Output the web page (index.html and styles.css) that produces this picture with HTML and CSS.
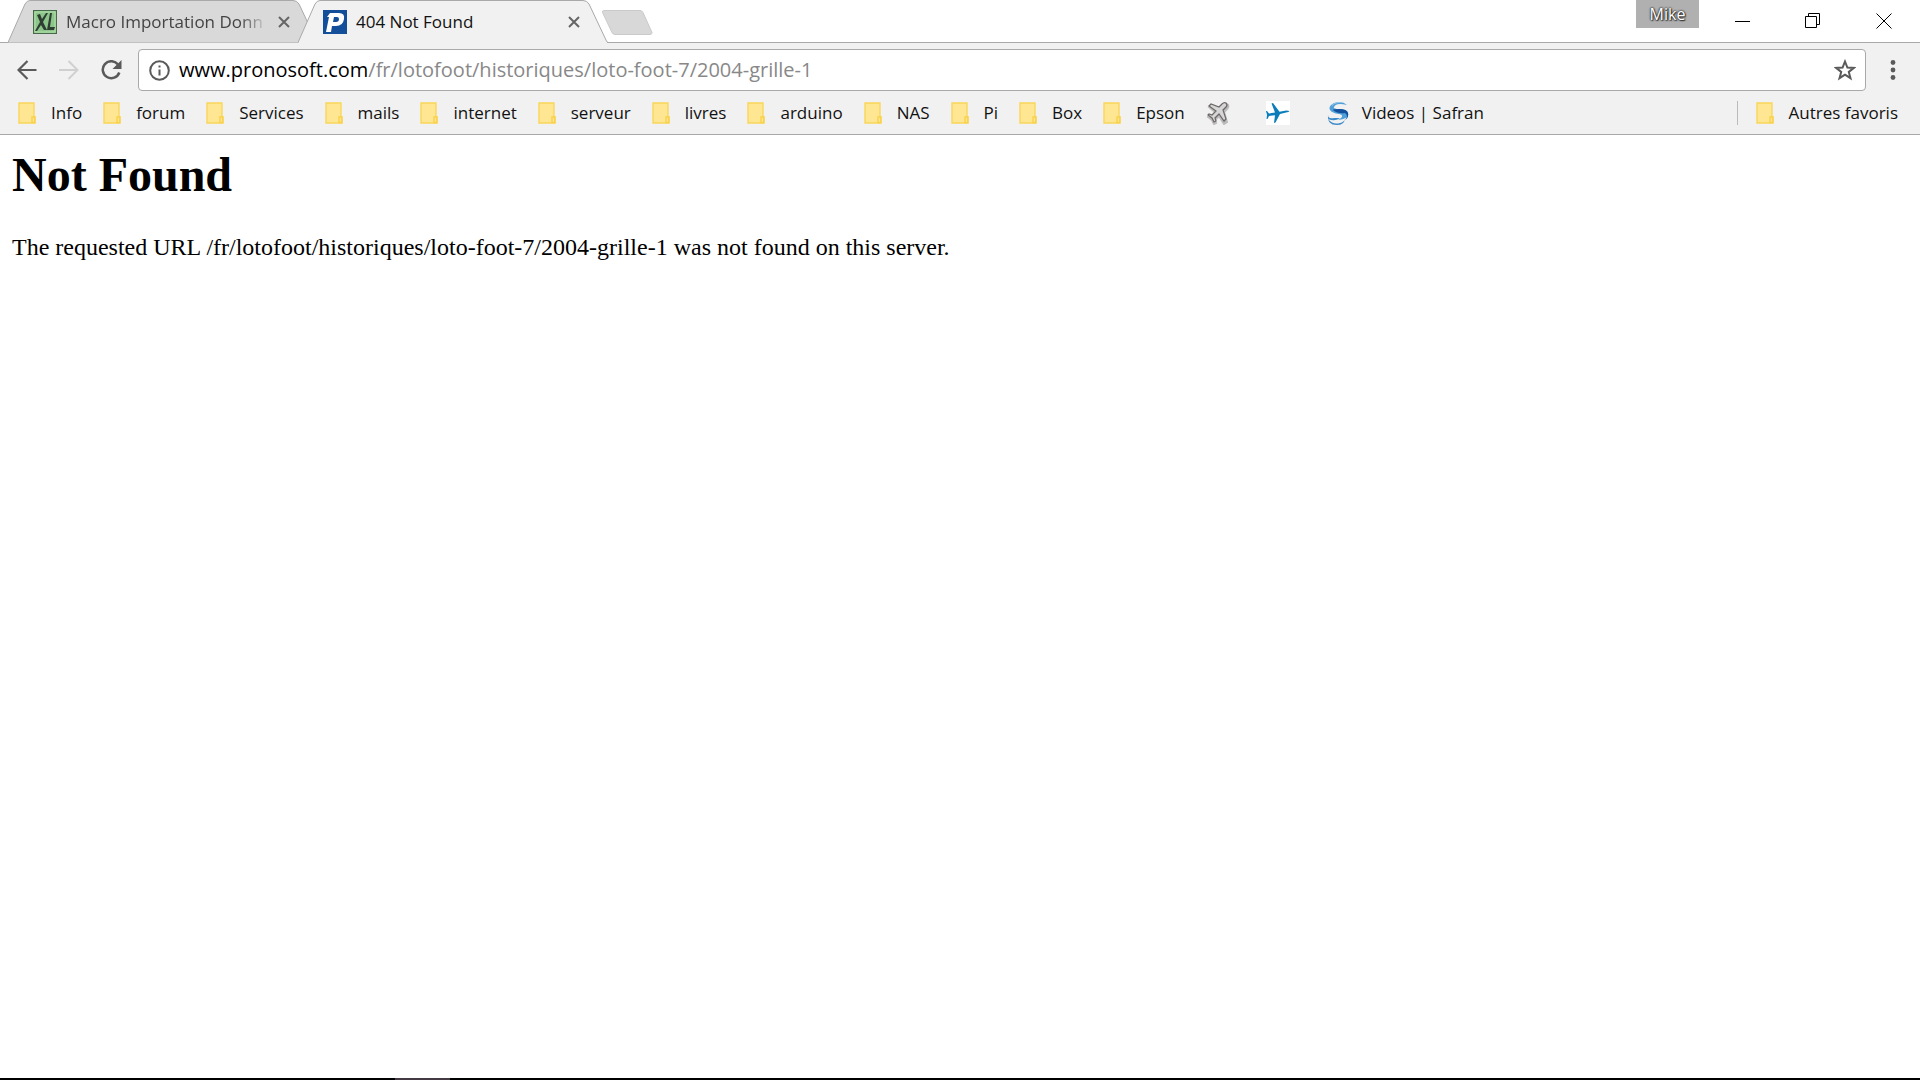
FILE: index.html
```html
<!DOCTYPE html>
<html lang="fr">
<head>
<meta charset="utf-8">
<title>404 Not Found</title>
<link rel="stylesheet" href="styles.css">
</head>
<body>
<svg class="defs" width="0" height="0" aria-hidden="true">
  <symbol id="folder" viewBox="0 0 18 22"><path d="M1 1h15v14h1v6H1z" fill="#ffe693" stroke="#f9d65a" stroke-width="1.4"/><path d="M14 20.500v-5.500h2.800v5.500z" fill="#ffe693" stroke="#f9d14a" stroke-width="1.400"/></symbol>
  <symbol id="cross" viewBox="0 0 12 12"><path d="M1 1l10 10M11 1L1 11" stroke="currentColor" stroke-width="2" fill="none"/></symbol>
  <symbol id="tabshape" viewBox="0 0 310 43"><path d="M0 42.500L17 4Q19 .5 22 .5H285Q289 .5 291 4L308 40Q309 42.500 310 42.500" stroke="#a9a9a9" stroke-width="1"/></symbol>
</svg>

<header class="chrome">
  <div class="strip">
    <div class="tabs">
      <div class="tab">
        <svg class="tab-shape" aria-hidden="true"><use href="#tabshape"/></svg>
        <svg class="favicon" viewBox="0 0 24 24" aria-hidden="true"><rect x=".5" y=".5" width="23" height="23" fill="#8cc68a" stroke="#47684a"/><path d="M2 2h20v20H2z" fill="none" stroke="#b4dfae"/><path d="M4 5l3-1 2 5 4-6h2l-5 9 4 8h-3l-3-5-4 6H2l5-9zM17 3h2l-2 14h5l-1 3h-7z" fill="#2f3e33"/></svg>
        <span class="tab-title fade">Macro Importation Donn</span>
        <button class="tab-close" aria-label="Fermer"><svg width="12" height="12"><use href="#cross"/></svg></button>
      </div>
      <div class="tab active">
        <svg class="tab-shape" aria-hidden="true"><use href="#tabshape"/></svg>
        <svg class="favicon" viewBox="0 0 24 24" aria-hidden="true"><rect width="24" height="24" fill="#124e9a"/><path fill-rule="evenodd" d="M7 3h9q6 0 5 6-1 7-8 7H9l-1 6H3L6 7H4zM11 7l-1 5h3q3 0 3-3 0-2-2-2z" fill="#fff"/></svg>
        <span class="tab-title">404 Not Found</span>
        <button class="tab-close" aria-label="Fermer"><svg width="12" height="12"><use href="#cross"/></svg></button>
      </div>
      <button class="new-tab" aria-label="Nouvel onglet"><svg width="51" height="25" viewBox="0 0 51 25"><path d="M2 .5h36q2 0 3 2l9 20q0 2-2 2H13q-2 0-3-2L.5 2.500Q0 .5 2 .5z" fill="#d8d8d8" stroke="#cacaca"/></svg></button>
    </div>
    <div class="window-controls">
      <button class="profile">Mike</button>
      <button class="win" aria-label="Réduire"><svg width="16" height="16"><path d="M0 8.500h15" stroke="#000"/></svg></button>
      <button class="win" aria-label="Restaurer"><svg width="16" height="16"><path d="M.5 3.500h11v11H.5zM3.500 3.500v-3h11v11h-3" fill="none" stroke="#000"/></svg></button>
      <button class="win" aria-label="Fermer la fenêtre"><svg width="16" height="16"><path d="M.5 .5l15 15M15.500 .5l-15 15" stroke="#000"/></svg></button>
    </div>
  </div>

  <div class="toolbar">
    <button class="nav" aria-label="Précédent"><svg width="20" height="20"><path d="M19.500 10H2M10.500 1L1.500 10l9 9" fill="none" stroke="#5a5a5a" stroke-width="2.200"/></svg></button>
    <button class="nav" aria-label="Suivant"><svg width="20" height="20"><path d="M0 10h18M9.500 1l9 9-9 9" fill="none" stroke="#d0d0d0" stroke-width="2"/></svg></button>
    <button class="nav" aria-label="Actualiser"><svg width="21" height="20"><path d="M17 4.500A8.500 8.500 0 1 0 18.300 12.500" fill="none" stroke="#5a5a5a" stroke-width="2.500"/><path d="M20.500 0v9h-9z" fill="#5a5a5a"/></svg></button>
    <div class="omnibox" role="group" aria-label="Adresse">
      <svg class="info" width="21" height="21" aria-hidden="true"><circle cx="10.500" cy="10.500" r="9.300" fill="none" stroke="#5a5a5a" stroke-width="2"/><path d="M9.500 9.500h2v6h-2zM9.500 5.500h2v2h-2z" fill="#5a5a5a"/></svg>
      <div class="url" role="textbox" aria-label="URL" contenteditable="true" spellcheck="false">www.pronosoft.com<span class="path">/fr/lotofoot/historiques/loto-foot-7/2004-grille-1</span></div>
      <button class="star" aria-label="Ajouter aux favoris"><svg width="22" height="22"><path d="M11 2.500l2.400 6 6.400.4-5 4 1.700 6.300-5.500-3.500-5.500 3.500 1.700-6.300-5-4 6.400-.4z" fill="none" stroke="#5a5a5a" stroke-width="2"/></svg></button>
    </div>
    <button class="menu" aria-label="Menu"><svg width="6" height="20"><g fill="#5a5a5a"><circle cx="3" cy="2.500" r="2.400"/><circle cx="3" cy="10" r="2.400"/><circle cx="3" cy="17.500" r="2.400"/></g></svg></button>
  </div>

  <nav class="bookmarks" aria-label="Favoris">
    <a href="#"><svg class="mark"><use href="#folder"/></svg>Info</a>
    <a href="#"><svg class="mark"><use href="#folder"/></svg>forum</a>
    <a href="#"><svg class="mark"><use href="#folder"/></svg>Services</a>
    <a href="#"><svg class="mark"><use href="#folder"/></svg>mails</a>
    <a href="#"><svg class="mark"><use href="#folder"/></svg>internet</a>
    <a href="#"><svg class="mark"><use href="#folder"/></svg>serveur</a>
    <a href="#"><svg class="mark"><use href="#folder"/></svg>livres</a>
    <a href="#"><svg class="mark"><use href="#folder"/></svg>arduino</a>
    <a href="#"><svg class="mark"><use href="#folder"/></svg>NAS</a>
    <a href="#"><svg class="mark"><use href="#folder"/></svg>Pi</a>
    <a href="#"><svg class="mark"><use href="#folder"/></svg>Box</a>
    <a href="#"><svg class="mark"><use href="#folder"/></svg>Epson</a>
    <a class="icon-only" href="#" aria-label="Avion gris"><svg width="24" height="24"><path d="M21 3q-2-2-5 1l-3 3-9-4-2 2 7 6-4 4-3-1-1 1 4 3 2 4 2-1-1-3 4-4 5 8 3-2-3-10 3-3q2-2 1-4z" transform="translate(1 1)" fill="#888" stroke="#999" stroke-width="2" opacity=".6"/><path d="M20 2q-2-1-4 1l-3 3-8-3-2 2 7 5-4 4-3-1-1 1 4 3 2 4 2-1-1-3 4-4 5 7 2-2-3-9 3-3q2-2 0-4z" fill="#d6d6d6" stroke="#6d6666" stroke-width="1.200"/></svg></a>
    <a class="icon-only" href="#" aria-label="Avion bleu"><svg width="24" height="24"><rect width="24" height="24" fill="#fff"/><path d="M23.500 10q-3-1-6 0l-4 .7L7 2 5.500 2.500 9 11.500l-6 1L1 10H0l1 4-.5 4h1l1.500-3 6-.8L8 22l1.500-.5 4.500-8.500 6-1.500q3-.5 3.500-1.500z" fill="#0c7dba"/></svg></a>
    <a class="site" href="#"><svg width="24" height="24"><path d="M21 4Q16-1 8 2q-6 3-4 7 2 3 9 4 5 1 2 4l-3 2q12-1 10-7-1-4-9-4-6 0-5-2 2-5 13-2z" fill="#4f9fd8"/><path d="M7 9q5 4 12 3 4 3 0 7 4-2 3-7-1-4-9-4-6 0-6 1z" fill="#124f9c"/><path d="M2 14q0 4 6 3h6q-5 4-12 1 5 6 12 4 4-1 5-4-1 6-8 6Q1 24 2 14z" fill="#3d8aca"/><path d="M6 4q4-4 12-2Q9 1 6 5z" fill="#b4dcf3"/></svg>Videos | Safran</a>
    <a class="others" href="#"><svg class="mark"><use href="#folder"/></svg>Autres favoris</a>
  </nav>
</header>

<main class="document">
  <h1>Not Found</h1>
  <p>The requested URL /fr/lotofoot/historiques/loto-foot-7/2004-grille-1 was not found on this server.</p>
</main>

<footer class="taskbar"><span class="task"></span></footer>
</body>
</html>
```
FILE: styles.css
```css
* { box-sizing: border-box; }

body {
  margin: 0;
  min-height: 100vh;
  display: flex;
  flex-direction: column;
  background: #fff;
  color: #000;
  font-family: "Open Sans", "Noto Sans", sans-serif;
  font-size: 17px;
}

button {
  margin: 0;
  padding: 0;
  border: 0;
  background: none;
  font: inherit;
  display: flex;
  align-items: center;
  justify-content: center;
  flex: none;
}

svg { display: block; flex: none; }
.defs { position: absolute; }

.chrome {
  background: #f1f1f1;
  border-bottom: 1px solid #a9a9a9;
}

/* Tab strip */
.strip {
  display: flex;
  justify-content: space-between;
  height: 43px;
  background: linear-gradient(#a9a9a9, #a9a9a9) bottom / 100% 1px no-repeat #fff;
}
.tabs { display: flex; padding-left: 8px; }
.tab {
  position: relative;
  display: flex;
  align-items: center;
  width: 310px;
  height: 43px;
  padding: 0 26px 0 25px;
  color: #444;
}
.tab.active { margin-left: -20px; color: #111; }
.tab-shape {
  position: absolute;
  inset: 0;
  width: 310px;
  height: 43px;
  fill: #d9d9d9;
}
.active .tab-shape { fill: #f1f1f1; }
.active::after {
  content: "";
  position: absolute;
  left: 1px;
  right: 1px;
  bottom: 0;
  height: 1px;
  background: #f1f1f1;
}
.favicon { position: relative; width: 24px; height: 24px; }
.tab-title {
  position: relative;
  flex: 1;
  min-width: 0;
  margin: 0 8px 0 9px;
  white-space: nowrap;
  line-height: 24px;
}
.fade {
  -webkit-mask-image: linear-gradient(to right, #000 86%, transparent);
  mask-image: linear-gradient(to right, #000 86%, transparent);
}
.tab-close { position: relative; width: 16px; height: 24px; color: #666; }
.new-tab { align-self: flex-start; margin: 10px 0 0 -6px; position: relative; }

.window-controls { display: flex; align-items: flex-start; }
.profile {
  width: 63px;
  height: 28px;
  margin-right: 9px;
  background: #b0b0b0;
  color: #fff;
  font-size: 16px;
  text-shadow: 0 0 2px #222, 0 0 2px #222, 1px 1px 1px #444;
}
.win { width: 70px; height: 41px; }
.win:last-child { width: 72px; }

/* Toolbar */
.toolbar {
  display: flex;
  align-items: center;
  padding: 6px 0 0 6px;
}
.nav { width: 42px; height: 42px; }
.omnibox {
  flex: 1;
  min-width: 0;
  display: flex;
  align-items: center;
  height: 42px;
  margin-left: 6px;
  padding: 0 9px 0 10px;
  border: 1px solid #a9a9a9;
  border-radius: 4px;
  background: #fff;
}
.url {
  flex: 1;
  min-width: 0;
  margin-left: 9px;
  overflow: hidden;
  white-space: nowrap;
  font-size: 20px;
  line-height: 30px;
}
.path { color: #888; }
.menu { width: 54px; height: 42px; }

/* Bookmarks bar */
.bookmarks {
  display: flex;
  align-items: center;
  gap: 21px;
  height: 43px;
  padding: 0 22px 0 18px;
}
.bookmarks a {
  display: flex;
  align-items: center;
  gap: 15px;
  height: 24px;
  color: #111;
  text-decoration: none;
  white-space: nowrap;
}
.mark { width: 18px; height: 22px; }
.bookmarks .icon-only { padding-right: 15px; }
.bookmarks .site { gap: 12px; }
.bookmarks .others {
  margin-left: auto;
  padding-left: 18px;
  border-left: 1px solid #bbb;
}

/* Server response */
.document {
  flex: 1;
  padding: 12px;
  font-family: "Liberation Serif", "Times New Roman", serif;
  font-size: 24px;
  line-height: 28px;
}
.document h1 {
  margin: 0 0 30px;
  font-size: 48px;
  line-height: 56px;
}
.document p { margin: 0; }

.taskbar {
  display: flex;
  height: 2px;
  padding-left: 395px;
  background: #000;
}
.task { width: 55px; background: #443a44; }
```
